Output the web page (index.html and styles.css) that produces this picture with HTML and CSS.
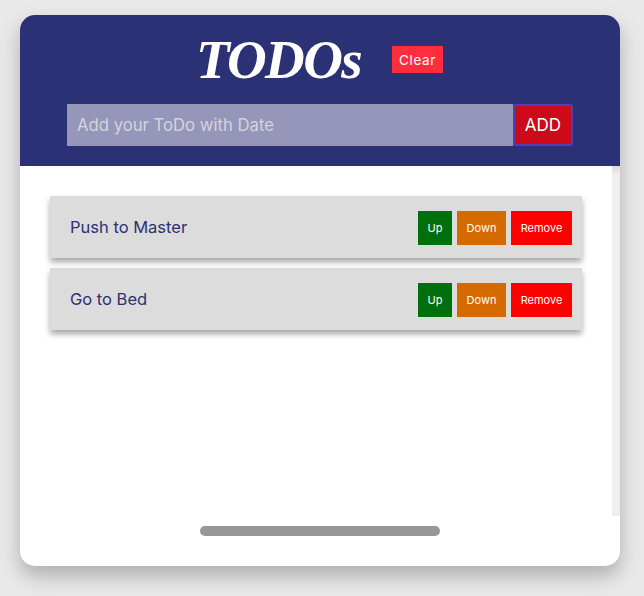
FILE: index.html
```html
<!DOCTYPE html>
<html lang="en">
<head>
<meta charset="utf-8">
<title>TODOs</title>
<link rel="stylesheet" href="styles.css">
</head>
<body>
<main class="card">
  <header class="header">
    <div class="title-row">
      <h1 class="title">TODOs</h1>
      <button class="clear">Clear</button>
    </div>
    <form class="add-row">
      <input class="add-input" type="text" placeholder="Add your ToDo with Date">
      <button class="add-btn" type="button">ADD</button>
    </form>
  </header>
  <div class="body">
    <ul class="list">
      <li class="item">
        <span class="item-text">Push to Master</span>
        <div class="actions">
          <button class="act up">Up</button>
          <button class="act down">Down</button>
          <button class="act remove">Remove</button>
        </div>
      </li>
      <li class="item">
        <span class="item-text">Go to Bed</span>
        <div class="actions">
          <button class="act up">Up</button>
          <button class="act down">Down</button>
          <button class="act remove">Remove</button>
        </div>
      </li>
    </ul>
    <div class="vtrack"></div>
  </div>
  <div class="footer"><div class="hthumb"></div></div>
</main>
</body>
</html>
```
FILE: styles.css
```css
* { box-sizing: border-box; }
html, body { height: 100%; }
body {
  margin: 0;
  padding: 15px 24px 30px 20px;
  background: #e9e9e9;
  font-family: "Inter", "Roboto", sans-serif;
  overflow: hidden;
}
.card {
  width: 600px;
  height: 551px;
  background: #fff;
  border-radius: 15px;
  box-shadow: 0 10px 20px rgba(0, 0, 0, 0.25);
  overflow: hidden;
  display: flex;
  flex-direction: column;
}
.header {
  height: 151px;
  background: #2b3175;
  padding-left: 47px;
}
.title-row {
  height: 89px;
  display: flex;
  align-items: center;
  padding-left: 129px;
}
.title {
  margin: 0;
  width: 196px;
  font-family: "Liberation Serif", serif;
  font-style: italic;
  font-weight: 700;
  font-size: 55px;
  line-height: 1;
  color: #fff;
  letter-spacing: -1.6px;
}
.clear {
  width: 51px;
  height: 27px;
  padding: 0;
  border: 0;
  background: #ff2d3d;
  color: #fff;
  font-family: "Inter", sans-serif;
  font-size: 13.5px;
  letter-spacing: 0.6px;
}
.add-row { display: flex; width: 506px; height: 42px; }
.add-input {
  width: 446px;
  height: 42px;
  border: 0;
  outline: 0;
  padding: 0 10px;
  background: #9596b9;
  font-family: "Inter", sans-serif;
  font-size: 16.7px;
  color: #fff;
}
.add-input::placeholder { color: #d4d4dc; opacity: 1; }
.add-btn {
  width: 60px;
  height: 42px;
  padding: 0;
  border: 2px solid #4f40b2;
  border-radius: 2px;
  background: #cc0a1a;
  color: #fff;
  font-family: "Inter", sans-serif;
  font-size: 17px;
}
.body { height: 350px; display: flex; }
.list {
  list-style: none;
  margin: 0;
  padding: 30px 0 0 30px;
  width: 592px;
  display: flex;
  flex-direction: column;
  gap: 10px;
}
.item {
  width: 532px;
  height: 62px;
  background: #dcdcdc;
  padding: 0 10px 0 20px;
  display: flex;
  align-items: center;
  justify-content: space-between;
  box-shadow: 0 4px 6px rgba(0, 0, 0, 0.35);
}
.item-text { font-size: 16.5px; color: #2b3175; }
.actions { display: flex; gap: 5px; margin-top: 2px; }
.act {
  height: 34px;
  padding: 0;
  border: 0;
  color: #fff;
  font-family: "Inter", sans-serif;
  font-size: 11px;
}
.up { width: 34px; background: #006f0e; }
.down { width: 49px; background: #d46a00; }
.remove { width: 61px; background: #ff0000; }
.vtrack { width: 8px; background: linear-gradient(#dadada, #efefef 8px); }
.footer { flex: 1; padding: 10px 0 0 180px; }
.hthumb { width: 240px; height: 10px; border-radius: 5px; background: #979797; }
```
